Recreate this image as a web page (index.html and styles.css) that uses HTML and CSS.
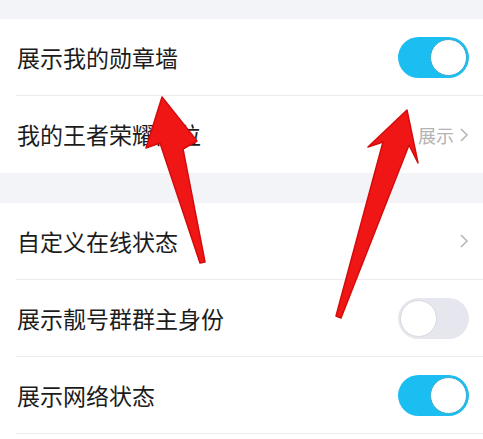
FILE: index.html
```html
<!DOCTYPE html>
<html lang="zh-CN">
<head>
    <meta charset="UTF-8">
    <meta name="viewport" content="width=device-width, initial-scale=1.0">
    <title>设置</title>
    <link rel="stylesheet" href="styles.css">
</head>
<body>
    <div class="page">
        <!-- 第一组 -->
        <section class="group">
            <div class="row">
                <span class="label">展示我的勋章墙</span>
                <span class="switch on"><span class="knob"></span></span>
            </div>
            <div class="row">
                <span class="label">我的王者荣耀段位</span>
                <span class="extra">展示
                    <svg class="chevron" viewBox="0 0 10 16"><polyline points="2,2 8,8 2,14"/></svg>
                </span>
            </div>
        </section>

        <!-- 第二组 -->
        <section class="group">
            <div class="row">
                <span class="label">自定义在线状态</span>
                <span class="extra">
                    <svg class="chevron" viewBox="0 0 10 16"><polyline points="2,2 8,8 2,14"/></svg>
                </span>
            </div>
            <div class="row">
                <span class="label">展示靓号群群主身份</span>
                <span class="switch"><span class="knob"></span></span>
            </div>
            <div class="row">
                <span class="label">展示网络状态</span>
                <span class="switch on"><span class="knob"></span></span>
            </div>
            <div class="row"></div>
        </section>

        <!-- 红色箭头标注 -->
        <svg class="arrows" viewBox="0 0 483 439">
            <polygon points="162,97 197,141 183,149 205,262 200,263 160,143 146,148"/>
            <polygon points="407,110 418,163 409,145 341,318 336,316 383,142 368,147"/>
        </svg>
    </div>
</body>
</html>
```

FILE: styles.css
```css
/* Reset */
* {
    margin: 0;
    padding: 0;
    box-sizing: border-box;
}

body {
    font-family: "Noto Sans CJK SC", "Noto Sans", sans-serif;
    background-color: #f3f4f8;
    color: #1c1c1c;
}

.page {
    position: relative;
    width: 483px;
    height: 439px;
    overflow: hidden;
    padding-top: 19px;
}

.group {
    background: #fff;
    padding-left: 16px;
    margin-bottom: 30px;
}

.row {
    display: flex;
    align-items: center;
    justify-content: space-between;
    height: 77px;
    padding: 0 14px 0 1px;
    border-bottom: 1px solid #ebebeb;
}

.group .row:last-child {
    border-bottom: none;
}

.label {
    font-size: 23px;
    line-height: 1;
}

.extra {
    display: flex;
    align-items: center;
    gap: 5px;
    font-size: 18px;
    color: #b3b3b3;
}

.chevron {
    width: 10px;
    height: 16px;
}

.chevron polyline {
    fill: none;
    stroke: #b8b8b8;
    stroke-width: 1.6;
}

/* Switch */
.switch {
    display: flex;
    align-items: center;
    width: 71px;
    height: 41px;
    border-radius: 21px;
    padding: 0 2px;
    background: #e6e7ee;
}

.switch .knob {
    width: 37px;
    height: 37px;
    border-radius: 50%;
    background: #fff;
    border: 1px solid #d9d9dd;
}

.switch.on {
    background: #1bbef1;
    justify-content: flex-end;
}

.switch.on .knob {
    border-color: #37a9d0;
}

.arrows {
    position: absolute;
    top: 0;
    left: 0;
    width: 483px;
    height: 439px;
    pointer-events: none;
}

.arrows polygon {
    fill: #f01616;
    stroke: #d40c0c;
    stroke-width: 1.5;
    stroke-linejoin: round;
}
```
